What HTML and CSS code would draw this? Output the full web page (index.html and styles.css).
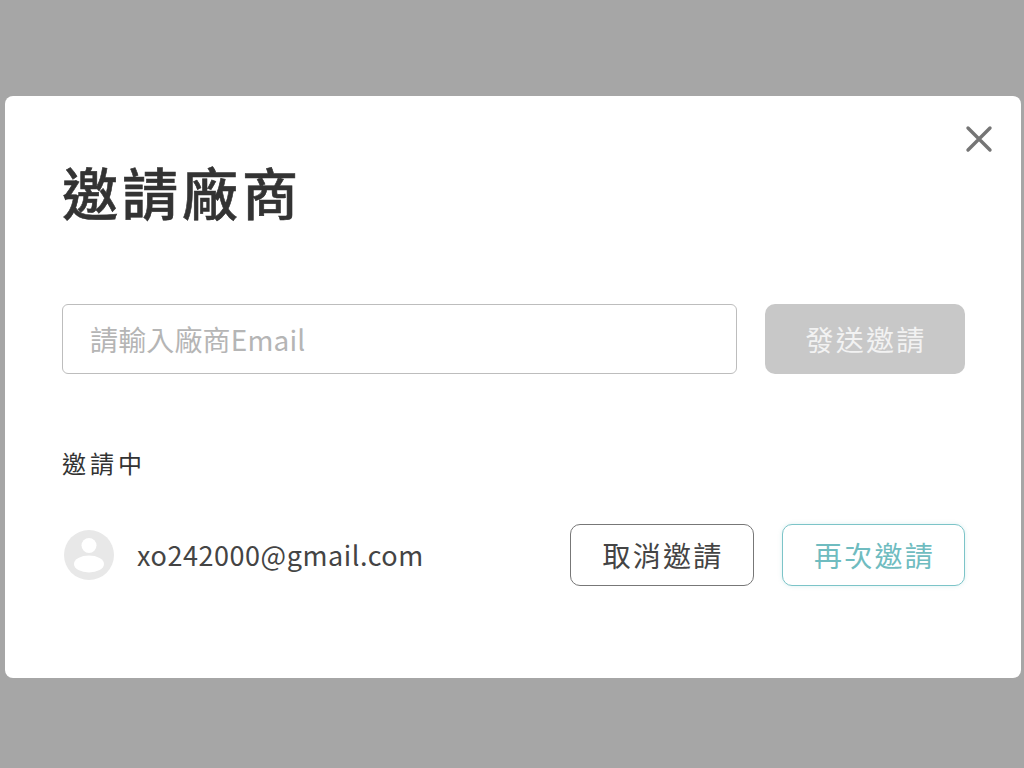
FILE: index.html
```html
<!DOCTYPE html>
<html lang="zh-TW">
<head>
  <meta charset="UTF-8" />
  <meta name="viewport" content="width=device-width, initial-scale=1.0" />
  <title>邀請廠商</title>
  <link rel="stylesheet" href="styles.css">
</head>
<body>

  <div class="dialog">
    <button class="close-btn" aria-label="關閉">
      <svg width="28" height="28" viewBox="0 0 28 28" fill="none" stroke="#757575" stroke-width="3.4" stroke-linecap="round">
        <path d="M3 3 L25 25 M25 3 L3 25" />
      </svg>
    </button>

    <h1 class="title">邀請廠商</h1>

    <div class="invite-form">
      <input class="email-input" type="text" placeholder="請輸入廠商Email" />
      <button class="btn btn-send">發送邀請</button>
    </div>

    <h2 class="section-label">邀請中</h2>

    <div class="invite-row">
      <svg class="avatar" width="50" height="50" viewBox="0 0 50 50">
        <circle cx="25" cy="25" r="25" fill="#e8e8e8" />
        <circle cx="25" cy="15.5" r="7.5" fill="#fff" />
        <ellipse cx="25" cy="34" rx="15" ry="8.5" fill="#fff" />
      </svg>
      <span class="invite-email">xo242000@gmail.com</span>
      <button class="btn btn-cancel">取消邀請</button>
      <button class="btn btn-again">再次邀請</button>
    </div>
  </div>

</body>
</html>
```

FILE: styles.css
```css
* {
  box-sizing: border-box;
  margin: 0;
  padding: 0;
}

html, body {
  height: 768px;
  overflow: hidden;
}

body {
  background: #a6a6a6;
  color: #333;
  font-family: "Noto Sans CJK TC", "Noto Sans", sans-serif;
  padding: 96px 3px 0 5px;
}

.dialog {
  position: relative;
  height: 582px;
  background: #fff;
  border-radius: 8px;
  padding: 56px 56px 0 57px;
}

.close-btn {
  position: absolute;
  top: 29px;
  right: 28px;
  width: 28px;
  height: 28px;
  background: none;
  border: none;
  cursor: pointer;
}

.close-btn svg {
  display: block;
}

.title {
  font-size: 56px;
  font-weight: 500;
  line-height: 78px;
  letter-spacing: 4px;
  color: #333;
  -webkit-text-stroke: 0.6px #333;
}

.invite-form {
  display: flex;
  gap: 28px;
  margin-top: 74px;
}

.email-input {
  flex: 1;
  height: 70px;
  border: 1px solid #bdbdbd;
  border-radius: 6px;
  padding: 0 27px;
  font-family: inherit;
  font-size: 28px;
  letter-spacing: 0.15px;
  outline: none;
}

.email-input::placeholder {
  color: #b5b5b5;
}

.btn {
  font-family: inherit;
  font-size: 28px;
  letter-spacing: 2.2px;
  padding-left: 2px;
  border-radius: 10px;
  background: #fff;
  cursor: pointer;
}

.btn-send {
  width: 200px;
  height: 70px;
  background: #c8c8c8;
  color: #f2f2f2;
  border: none;
}

.section-label {
  font-size: 24px;
  font-weight: 400;
  line-height: 36px;
  letter-spacing: 4px;
  color: #333;
  margin-top: 71px;
}

.invite-row {
  display: flex;
  align-items: center;
  margin-top: 43px;
}

.avatar {
  margin-left: 2px;
  flex-shrink: 0;
}

.invite-email {
  flex: 1;
  margin-left: 23px;
  margin-bottom: 2px;
  font-size: 27px;
  letter-spacing: 0.55px;
  color: #444;
}

.btn-cancel {
  width: 184px;
  height: 62px;
  border: 1px solid #777;
  color: #444;
}

.btn-again {
  width: 183px;
  height: 62px;
  margin-left: 28px;
  border: 1px solid #7cc4c8;
  color: #6fbcc0;
  box-shadow: 0 0 4px rgba(124, 196, 200, 0.25);
}
```
